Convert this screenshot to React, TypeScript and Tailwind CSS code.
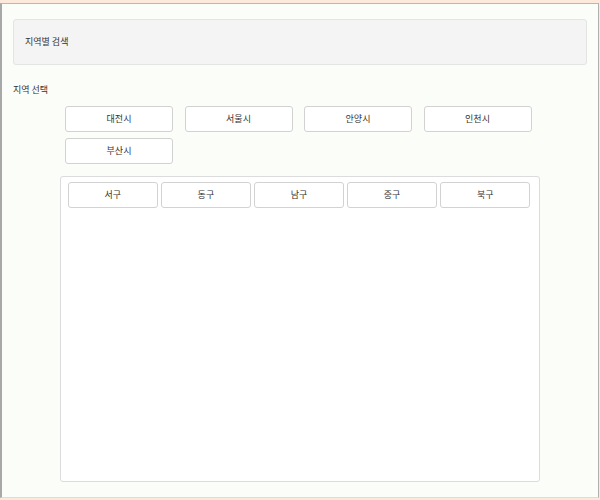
import React from "react";

const cities = ["대전시", "서울시", "안양시", "인천시", "부산시"];
const districts = ["서구", "동구", "남구", "중구", "북구"];

export default function App() {
  return (
    <div
      className="w-[600px] h-[500px] bg-[#fde9dc] pt-[3px] overflow-hidden"
      style={{ fontFamily: '"Noto Sans CJK KR", "Noto Sans", sans-serif' }}
    >
      <div className="h-[495px] w-[599px] bg-[#fbfdf9] border-t border-t-[#b8b8b8] border-l-2 border-l-[#a8a8a8] border-r border-r-[#b0b0b0] border-b border-b-[#dcdcdc] pl-[11px] pr-[11px] pt-[15px] text-[#333]">
        <div className="h-[46px] w-[574px] bg-[#f4f4f4] border border-[#e4e4e4] rounded-[3px] flex items-center pl-[11px] text-[9px]">
          지역별 검색
        </div>
        <div className="mt-[19px] text-[9px] leading-[12px]">지역 선택</div>
        <div className="ml-[52px] mt-[10px] w-[480px] flex flex-wrap gap-x-[11.5px] gap-y-[6px]">
          {cities.map((c) => (
            <button
              key={c}
              className="w-[108px] h-[26px] bg-white border border-[#d2d2d2] rounded-[3px] text-[9px] flex items-center justify-center"
            >
              {c}
            </button>
          ))}
        </div>
        <div className="ml-[47px] mt-[12px] w-[480px] h-[306px] bg-white border border-[#dcdcdc] rounded-[3px] pl-[7px] pr-[9px] pt-[5px] flex gap-[3.5px] items-start">
          {districts.map((d) => (
            <button
              key={d}
              className="flex-1 h-[26px] bg-white border border-[#d2d2d2] rounded-[3px] text-[9px] flex items-center justify-center"
            >
              {d}
            </button>
          ))}
        </div>
      </div>
    </div>
  );
}
